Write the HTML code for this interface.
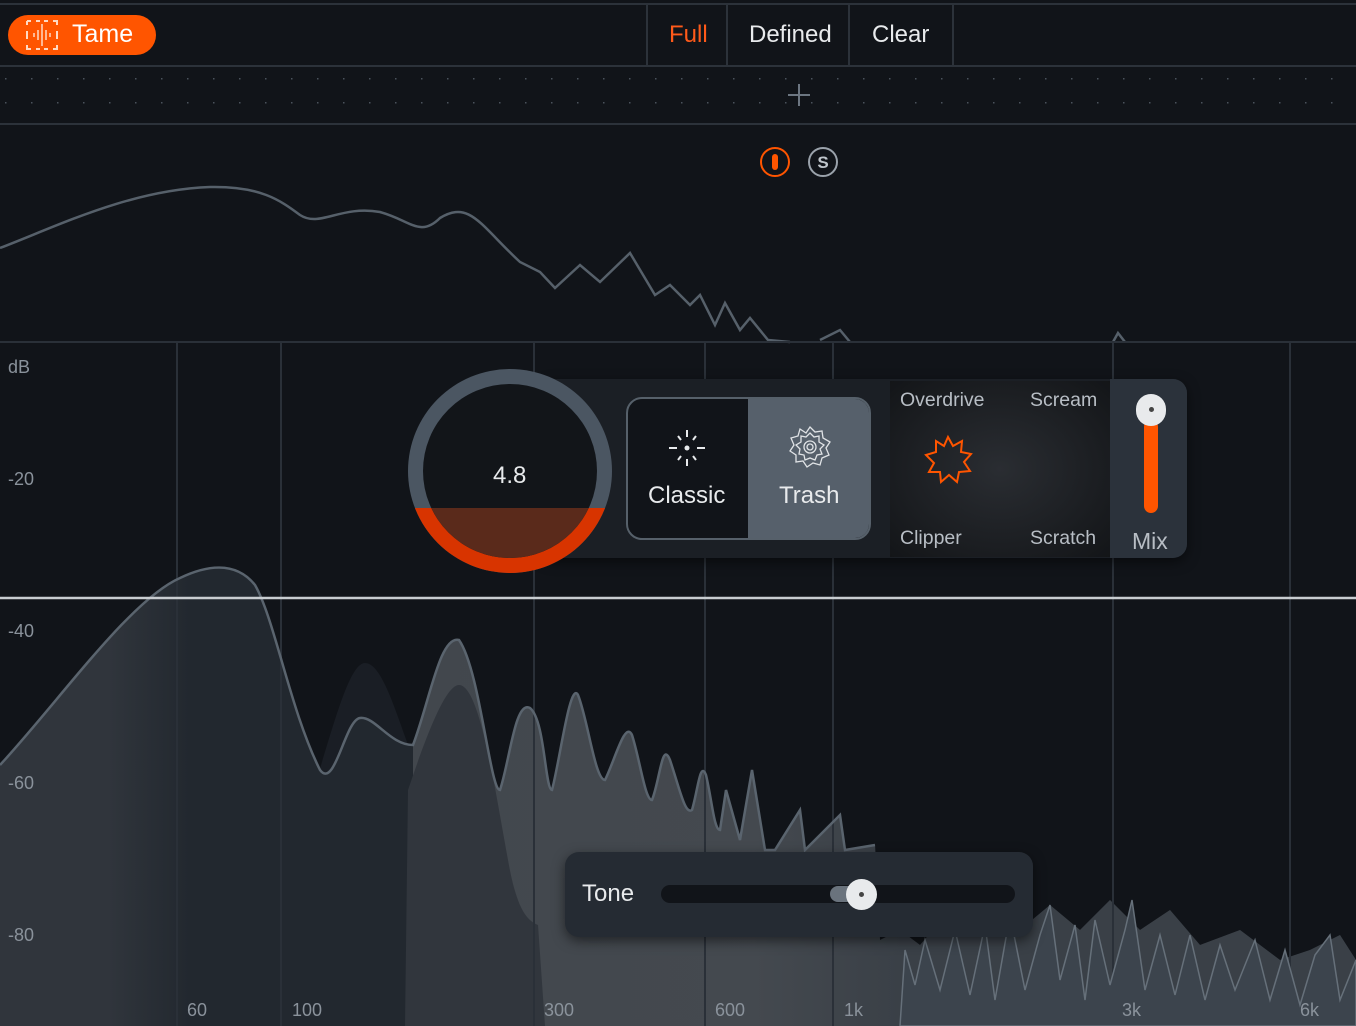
<!DOCTYPE html><html><head><style>
body{margin:0;width:1356px;height:1026px;overflow:hidden;background:#111419;font-family:"Liberation Sans",sans-serif;position:relative}
.a{position:absolute}
.t{color:#e8eaec}
</style></head><body>
<div class="a" style="left:0;top:3px;width:1356px;height:2px;background:#2c323a"></div>
<div class="a" style="left:0;top:65px;width:1356px;height:2px;background:#2c323a"></div>
<div class="a" style="left:0;top:123px;width:1356px;height:2px;background:#2c323a"></div>
<div class="a" style="left:8px;top:15px;width:148px;height:40px;border-radius:20px;background:#ff5500"></div>
<svg class="a" style="left:26px;top:20px" width="32" height="30" viewBox="0 0 32 30" fill="none" stroke="#ffd9c4" stroke-width="2"><path d="M1 1h4M1 1v4M1 25v4h4M27 1h4v4M31 25v4h-4M10 1h4M18 1h4M10 29h4M18 29h4M1 11v8M31 11v8"/><path d="M16 4v22M12 10v10M20 10v10M8 13v4M24 13v4" stroke-width="1.5"/></svg>
<div class="a" style="left:72px;top:20px;font-size:25px;color:#fff">Tame</div>
<div class="a" style="left:646px;top:5px;width:304px;height:60px;border-left:2px solid #2c323a;border-right:2px solid #2c323a"></div>
<div class="a" style="left:726px;top:5px;width:2px;height:60px;background:#2c323a"></div>
<div class="a" style="left:848px;top:5px;width:2px;height:60px;background:#2c323a"></div>
<div class="a" style="left:669px;top:21px;font-size:24px;color:#ff5a1a">Full</div>
<div class="a t" style="left:749px;top:21px;font-size:24px">Defined</div>
<div class="a t" style="left:872px;top:21px;font-size:24px">Clear</div>
<svg class="a" style="left:0;top:66px" width="1356" height="58"><g fill="#4a525c"><pattern id="d" width="26" height="58" patternUnits="userSpaceOnUse"><rect x="5" y="12" width="1.5" height="1.5"/><rect x="5" y="36" width="1.5" height="1.5"/></pattern><rect width="1356" height="58" fill="url(#d)"/></g><path d="M788 29h22M799 18v22" stroke="#6c7681" stroke-width="2"/></svg>
<svg class="a" style="left:759px;top:147px" width="82" height="32"><circle cx="16" cy="15" r="14" fill="none" stroke="#ff5500" stroke-width="2"/><rect x="13" y="7" width="6" height="16" rx="3" fill="#ff5500"/><circle cx="64" cy="15" r="14" fill="none" stroke="#9aa2ab" stroke-width="2"/><text x="64" y="21" font-size="17" font-weight="bold" fill="#bfc5cb" text-anchor="middle" font-family="Liberation Sans">S</text></svg>
<svg class="a" style="left:0;top:0" width="1356" height="1026">
<path d="M0 248C60 225 130 190 210 187C260 186 280 200 300 215C320 228 340 205 380 212C410 220 420 238 440 218C470 200 480 225 520 262L540 272L555 288L580 265L600 282L630 253L655 295L670 285L690 305L700 295L715 325L725 303L740 330L750 318L768 340L790 342M820 340L840 330L850 342M1113 342L1118 333L1125 342" fill="none" stroke="#56606a" stroke-width="2.5"/>
<defs>
<linearGradient id="g" x1="0" y1="0" x2="1356" y2="0" gradientUnits="userSpaceOnUse"><stop offset="0" stop-color="#30353c"/><stop offset="0.08" stop-color="#30353c"/><stop offset="0.14" stop-color="#22282f"/><stop offset="1" stop-color="#22282f"/></linearGradient>
<linearGradient id="l" x1="413" y1="0" x2="900" y2="0" gradientUnits="userSpaceOnUse"><stop offset="0" stop-color="#42474d"/><stop offset="0.7" stop-color="#44494f"/><stop offset="1" stop-color="#3a4047"/></linearGradient>
<clipPath id="c"><path d="M0 765C60 700 130 600 180 578C205 566 235 560 255 585C275 620 290 710 320 770C335 790 345 720 360 718C375 716 390 745 413 745C430 700 440 635 459 640C480 670 490 790 500 790C510 760 515 700 530 708C545 720 545 790 552 790C560 760 570 680 578 695C588 720 595 780 605 780C615 760 625 720 632 735C640 760 645 800 652 800C660 780 662 740 670 760C680 790 685 815 692 810C698 790 700 760 706 775C712 800 714 830 720 830L726 790L740 840L752 770L765 850L775 850L800 810L805 850L840 815L845 850L875 845L880 940L900 930L920 945L950 910L980 920L1000 900L1020 930L1050 905L1080 930L1110 900L1140 930L1170 910L1200 945L1240 930L1280 960L1310 950L1340 935L1356 960L1356 1026L0 1026Z"/></clipPath>
</defs>
<path d="M318 775C335 720 350 663 365 663C385 663 400 730 420 775Z" fill="#1a1e25"/>
<g clip-path="url(#c)">
<rect width="1356" height="1026" fill="url(#g)"/>
<rect x="413" y="600" width="943" height="426" fill="url(#l)"/>
<path d="M405 1026L408 790C425 740 445 685 459 685C480 685 495 790 508 860C516 905 525 920 538 925L545 1026Z" fill="#31363d"/>
</g>
<g stroke="#2a3038" stroke-width="2"><path d="M0 342H1356M177 342V1026M281 342V1026M534 342V1026M705 342V1026M833 342V1026M1113 342V1026M1290 342V1026"/></g>
<path d="M0 765C60 700 130 600 180 578C205 566 235 560 255 585C275 620 290 710 320 770C335 790 345 720 360 718C375 716 390 745 413 745C430 700 440 635 459 640C480 670 490 790 500 790C510 760 515 700 530 708C545 720 545 790 552 790C560 760 570 680 578 695C588 720 595 780 605 780C615 760 625 720 632 735C640 760 645 800 652 800C660 780 662 740 670 760C680 790 685 815 692 810C698 790 700 760 706 775C712 800 714 830 720 830L726 790L740 840L752 770L765 850L775 850L800 810L805 850L840 815L845 850L875 845" fill="none" stroke="#5a646e" stroke-width="2.5"/>
<path d="M900 1026L905 950L915 985L925 940L940 990L955 930L970 995L985 925L995 1000L1010 915L1025 990L1040 935L1050 905L1060 980L1075 925L1085 1000L1095 920L1110 985L1125 930L1132 900L1145 990L1160 935L1175 995L1190 935L1205 1000L1220 945L1235 990L1255 940L1270 1000L1285 950L1300 1005L1315 955L1330 935L1340 1000L1356 960V1026Z" fill="#3c444d" stroke="#66707a" stroke-width="1.5"/>
<path d="M0 598H1356" stroke="#c9cdd1" stroke-width="2.5"/>
</svg>
<div class="a" style="left:8px;top:357px;font-size:18px;color:#8a929b">dB</div>
<div class="a" style="left:8px;top:469px;font-size:18px;color:#8a929b">-20</div>
<div class="a" style="left:8px;top:621px;font-size:18px;color:#8a929b">-40</div>
<div class="a" style="left:8px;top:773px;font-size:18px;color:#8a929b">-60</div>
<div class="a" style="left:8px;top:925px;font-size:18px;color:#8a929b">-80</div>
<div class="a" style="left:187px;top:1000px;font-size:18px;color:#8a929b">60</div>
<div class="a" style="left:292px;top:1000px;font-size:18px;color:#8a929b">100</div>
<div class="a" style="left:544px;top:1000px;font-size:18px;color:#8a929b">300</div>
<div class="a" style="left:715px;top:1000px;font-size:18px;color:#8a929b">600</div>
<div class="a" style="left:844px;top:1000px;font-size:18px;color:#8a929b">1k</div>
<div class="a" style="left:1122px;top:1000px;font-size:18px;color:#8a929b">3k</div>
<div class="a" style="left:1300px;top:1000px;font-size:18px;color:#8a929b">6k</div>
<div class="a" style="left:540px;top:379px;width:647px;height:179px;border-radius:14px;background:#1b1f25;box-shadow:0 4px 12px rgba(0,0,0,.5)"></div>
<div class="a" style="left:1110px;top:379px;width:77px;height:179px;border-radius:0 14px 14px 0;background:#2b323b"></div>
<div class="a" style="left:890px;top:381px;width:220px;height:176px;background:radial-gradient(#2a2d32,#131518)"></div>
<div class="a" style="left:1144px;top:420px;width:14px;height:93px;border-radius:7px;background:#ff5500"></div>
<div class="a" style="left:1136px;top:394px;width:30px;height:32px;border-radius:15px;background:#e8eaec"></div>
<div class="a" style="left:1149px;top:407px;width:5px;height:5px;border-radius:3px;background:#444"></div>
<div class="a" style="left:1132px;top:528px;font-size:23px;color:#b8bec5">Mix</div>
<div class="a" style="left:900px;top:389px;font-size:19.5px;color:#b8bec5">Overdrive</div>
<div class="a" style="left:1030px;top:389px;font-size:19.5px;color:#b8bec5">Scream</div>
<div class="a" style="left:900px;top:527px;font-size:19.5px;color:#b8bec5">Clipper</div>
<div class="a" style="left:1030px;top:527px;font-size:19.5px;color:#b8bec5">Scratch</div>
<svg class="a" style="left:922px;top:434px" width="52" height="52" viewBox="-26 -26 52 52"><polygon points="0,-23 5,-14 14,-19 13,-8 23,-6 16,2 22,11 11,12 9,22 1,15 -7,22 -8,12 -19,12 -14,3 -22,-5 -12,-8 -12,-19 -4,-14" fill="none" stroke="#ff5500" stroke-width="2"/></svg>
<div class="a" style="left:626px;top:397px;width:245px;height:143px;border-radius:16px;border:2px solid #56606a;background:#111419;overflow:hidden;box-sizing:border-box">
<div class="a" style="left:120px;top:0;width:125px;height:143px;background:#56606b"></div></div>
<svg class="a" style="left:666px;top:428px" width="42" height="40" stroke="#e8eaec" stroke-width="2"><circle cx="21" cy="20" r="2.5" fill="#e8eaec" stroke="none"/><path d="M21 2v7M21 31v7M3 20h8M31 20h8M12 8l3 4M30 8l-3 4M12 32l3-4M30 32l-3-4"/></svg>
<svg class="a" style="left:788px;top:425px" width="44" height="44" viewBox="-22 -22 44 44" fill="none" stroke="#e0e3e6" stroke-width="1.3"><polygon points="0,-20 5,-15 12,-16 13,-9 20,-5 16,1 19,8 12,11 10,18 3,16 -3,20 -7,14 -14,15 -14,8 -20,4 -16,-2 -19,-9 -12,-11 -10,-18 -4,-14"/><polygon points="0,-14 4,-10 9,-11 9,-5 14,-2 10,2 12,7 7,8 5,13 0,11 -5,13 -6,8 -11,7 -10,2 -14,-2 -9,-5 -9,-11 -4,-10"/><circle r="6"/><circle r="3"/></svg>
<div class="a t" style="left:648px;top:482px;font-size:24px">Classic</div>
<div class="a t" style="left:779px;top:482px;font-size:24px">Trash</div>
<div class="a" style="left:408px;top:369px;width:204px;height:204px;border-radius:50%;background:#4b5662;overflow:hidden">
<div class="a" style="left:0;top:139px;width:204px;height:70px;background:#d83400"></div>
<div class="a" style="left:15px;top:15px;width:174px;height:174px;border-radius:50%;background:#121519;overflow:hidden">
<div class="a" style="left:0;top:124px;width:174px;height:60px;background:#5a2a1b"></div></div></div>
<div class="a t" style="left:493px;top:462px;font-size:24px">4.8</div>
<div class="a" style="left:565px;top:852px;width:468px;height:85px;border-radius:14px;background:#252b33;box-shadow:0 4px 12px rgba(0,0,0,.5)"></div>
<div class="a t" style="left:582px;top:880px;font-size:24px">Tone</div>
<div class="a" style="left:661px;top:885px;width:354px;height:18px;border-radius:9px;background:#111419"></div>
<div class="a" style="left:830px;top:886px;width:32px;height:16px;border-radius:8px;background:#6a737d"></div>
<div class="a" style="left:846px;top:879px;width:31px;height:31px;border-radius:50%;background:#e8eaec"></div>
<div class="a" style="left:859px;top:892px;width:5px;height:5px;border-radius:3px;background:#444"></div>
</body></html>
